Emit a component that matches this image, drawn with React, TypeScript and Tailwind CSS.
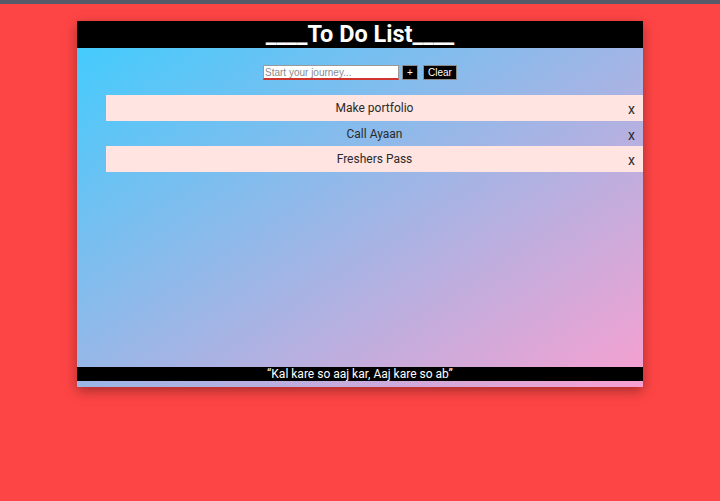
import { useState } from 'react'

const initialTasks = ['Make portfolio', 'Call Ayaan', 'Freshers Pass']

export default function App() {
  const [tasks, setTasks] = useState(initialTasks)
  const [text, setText] = useState('')

  const addTask = () => {
    if (!text.trim()) return
    setTasks([...tasks, text.trim()])
    setText('')
  }

  return (
    <div className="min-h-[501px] w-full bg-[#fe4545] font-['Roboto',sans-serif]">
      <div className="h-1 bg-[#595a68]" />
      <div className="pt-[17px] flex justify-center">
        {/* Card */}
        <div className="w-[566px] h-[366px] flex flex-col bg-[linear-gradient(to_bottom_right,#3dcdfe,#f8a0d0)] shadow-[0_4px_12px_rgba(0,0,0,0.35)]">
          <div className="h-[27px] bg-black text-white text-center font-bold text-[23.5px] leading-[27px]">
            ____To Do List____
          </div>

          <div className="flex-1">
            {/* Input row */}
            <div className="flex justify-center items-center mt-[17px]">
              <input
                type="text"
                value={text}
                onChange={(e) => setText(e.target.value)}
                placeholder="Start your journey..."
                className="w-[136px] h-[15px] bg-white border border-[#9a9a9a] border-b-2 border-b-[#d0342c] text-[10px] leading-[12px] px-[1px] outline-none placeholder:text-[#8a8a8a] font-['Liberation_Sans',sans-serif]"
              />
              <button
                onClick={addTask}
                className="ml-[3px] w-4 h-[15px] bg-black text-white text-[10px] leading-[12px] border border-[#8a8a8a] font-['Liberation_Sans',sans-serif]"
              >
                +
              </button>
              <button
                onClick={() => setTasks([])}
                className="ml-[5px] w-[34px] h-[15px] bg-black text-white text-[10px] leading-[12px] border border-[#8a8a8a] font-['Liberation_Sans',sans-serif]"
              >
                Clear
              </button>
            </div>

            {/* Tasks */}
            <ul className="mt-[15px] pl-[29px]">
              {tasks.map((task, i) => (
                <li
                  key={i}
                  className={`relative h-[25.5px] flex items-center justify-center text-[12px] text-[#2a2a2a] ${
                    i % 2 === 0 ? 'bg-[#ffe4e1]' : ''
                  }`}
                >
                  <span className="mt-[1px]">{task}</span>
                  <span
                    onClick={() => setTasks(tasks.filter((_, j) => j !== i))}
                    className="absolute right-[8px] top-[6px] text-[14px] leading-[16px] text-[#2a2a2a] cursor-pointer"
                  >
                    x
                  </span>
                </li>
              ))}
            </ul>
          </div>

          <div className="h-[14px] bg-black text-white text-center text-[12px] leading-[15px] mb-[6px]">
            “Kal kare so aaj kar, Aaj kare so ab”
          </div>
        </div>
      </div>
    </div>
  )
}
